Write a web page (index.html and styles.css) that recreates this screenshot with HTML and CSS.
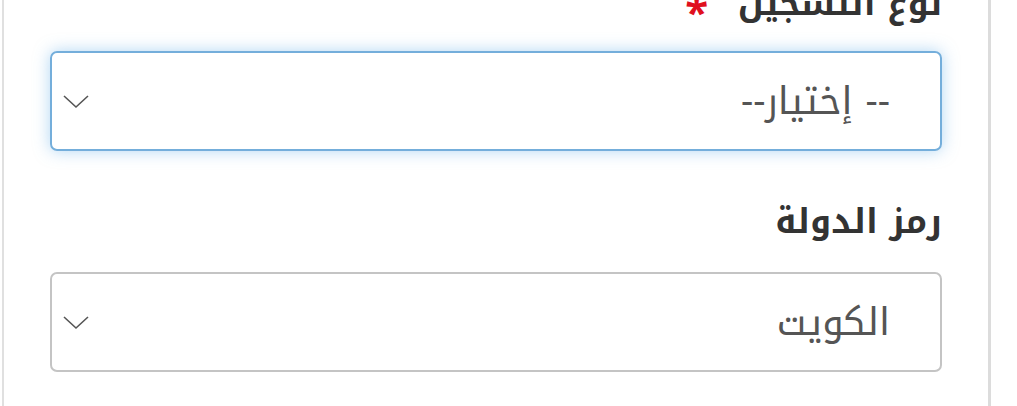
FILE: index.html
```html
<!DOCTYPE html>
<html lang="ar" dir="rtl">
<head>
  <meta charset="UTF-8">
  <meta name="viewport" content="width=device-width, initial-scale=1.0">
  <title>التسجيل</title>
  <link rel="stylesheet" href="styles.css">
</head>
<body>
  <div class="panel">
    <div class="field first">
      <label class="field-label">نوع التسجيل <span class="req">*</span></label>
      <div class="select focused">
        <span class="select-text">-- إختيار--</span>
        <svg class="chevron" width="28" height="16" viewBox="0 0 28 16">
          <polyline points="2,3 14,14 26,3" fill="none" stroke="#555" stroke-width="1.6"/>
        </svg>
      </div>
    </div>
    <div class="field">
      <label class="field-label">رمز الدولة</label>
      <div class="select">
        <span class="select-text">الكويت</span>
        <svg class="chevron" width="28" height="16" viewBox="0 0 28 16">
          <polyline points="2,3 14,14 26,3" fill="none" stroke="#555" stroke-width="1.6"/>
        </svg>
      </div>
    </div>
  </div>
</body>
</html>
```

FILE: styles.css
```css
* {
  margin: 0;
  padding: 0;
  box-sizing: border-box;
}
body {
  font-family: "Noto Kufi Arabic", "Noto Sans Arabic", "DejaVu Sans", sans-serif;
  background: #fff;
  overflow: hidden;
}
.panel {
  display: flow-root;
  margin: 0 26px 0 2px;
  height: 406px;
  border-left: 2px solid #e0e0e0;
  border-right: 3px solid #dcdcdc;
  padding: 0 46px;
}
.field {
  margin-bottom: 44px;
}
.field.first {
  margin-top: -23px;
}
.field.first .field-label {
  margin-bottom: 17px;
}
.field-label {
  display: block;
  font-size: 34px;
  font-weight: 700;
  color: #333;
  line-height: 54px;
  margin-bottom: 23px;
}
.req {
  color: #e0101e;
  font-size: 42px;
  line-height: 1;
  vertical-align: -12px;
  margin-right: 18px;
}
.select {
  height: 100px;
  border: 2px solid #c4c4c4;
  border-radius: 7px;
  display: flex;
  align-items: center;
  justify-content: space-between;
  padding: 0 50px 0 10px;
}
.select.focused {
  border-color: #74aedb;
  box-shadow: 0 0 16px rgba(102, 175, 233, 0.5);
}
.select-text {
  font-size: 38px;
  color: #555;
}
.chevron {
  display: block;
}
```
